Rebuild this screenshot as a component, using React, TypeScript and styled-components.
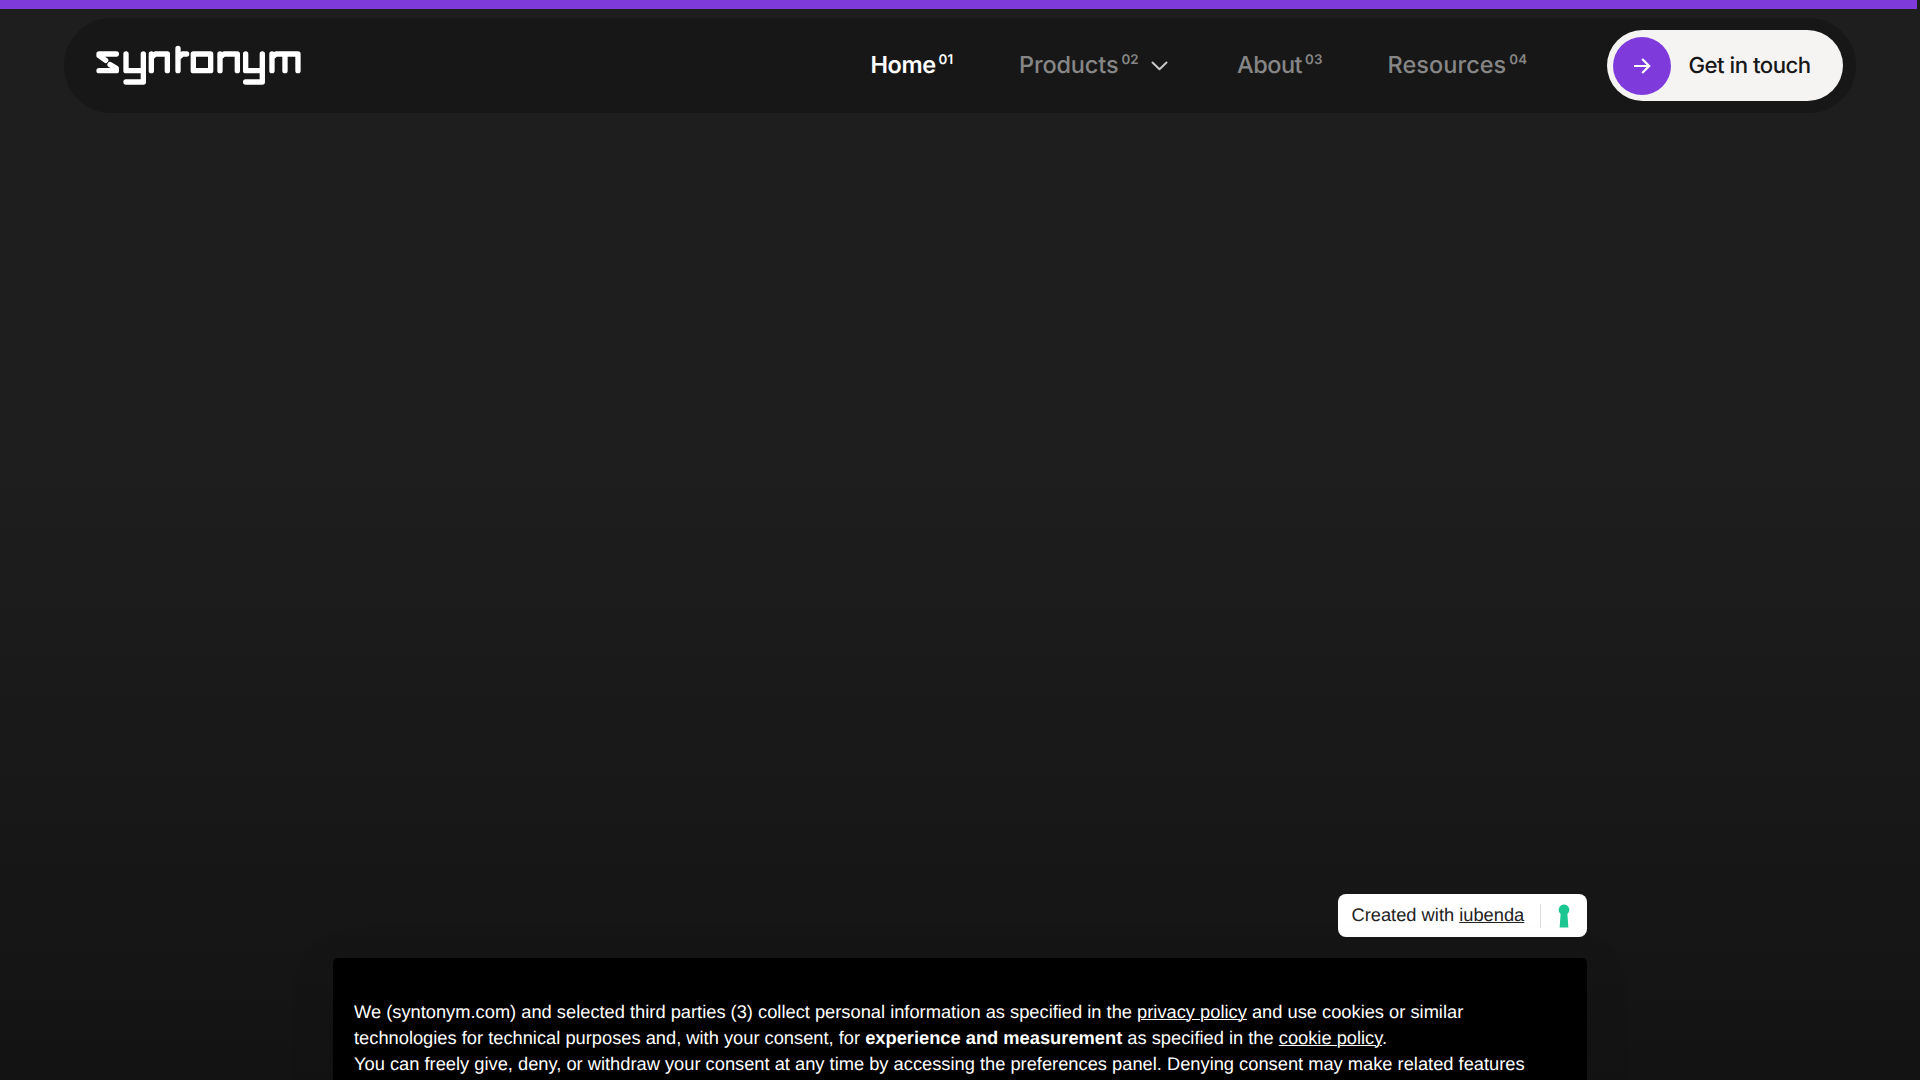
import React from 'react';
import styled, { createGlobalStyle } from 'styled-components';

const GlobalStyle = createGlobalStyle`
  *, *::before, *::after { box-sizing: border-box; }
  body { margin: 0; background: #1e1e1e; overflow: hidden; }
`;

const Page = styled.div`
  height: 1080px;
  overflow: hidden;
  display: flex;
  flex-direction: column;
  font-family: Inter, 'Liberation Sans', sans-serif;
  text-rendering: geometricPrecision;
  background: linear-gradient(180deg, #1e1e1e 0%, #1e1e1e 42%, #181818 73%, #131313 100%);
`;

const Progress = styled.div`
  flex: none;
  width: 1917px;
  height: 9px;
  background: #7f3adc;
`;

const Header = styled.header`
  flex: none;
  display: flex;
  align-items: center;
  height: 95px;
  margin: 9px 64px 0;
  padding: 0 13px 0 32px;
  border-radius: 48px;
  background: #171717;
`;

const LogoLink = styled.a`
  display: block;
  height: 41px;
  margin-right: auto;
`;

const Nav = styled.nav`
  display: flex;
  align-items: center;
`;

const NavItem = styled.a<{ $active?: boolean; $width: number; $spacing: number }>`
  display: flex;
  align-items: center;
  width: ${(p) => p.$width}px;
  padding-bottom: 1px;
  color: ${(p) => (p.$active ? '#ffffff' : '#868686')};
  font-size: 23.5px;
  font-weight: ${(p) => (p.$active ? 600 : 500)};
  line-height: 32px;
  letter-spacing: ${(p) => p.$spacing}px;
  white-space: nowrap;
`;

const Index = styled.span`
  margin: -10px 0 0 3px;
  font-size: 13.33px;
  font-weight: 600;
  line-height: 16px;
  letter-spacing: 0.1px;
`;

const Chevron = styled.svg`
  margin: 1px 0 0 12px;
`;

const Cta = styled.button`
  display: flex;
  align-items: center;
  width: 236px;
  height: 71px;
  margin-bottom: 1px;
  padding: 1px 0 0 6px;
  border: 0;
  border-radius: 36px;
  background: #f5f4f3;
  color: #171717;
  font: 500 22.2px/32px Inter, 'Liberation Sans', sans-serif;
  letter-spacing: -0.5px;
  white-space: nowrap;
  text-rendering: inherit;
`;

const CtaIcon = styled.span`
  display: flex;
  align-items: center;
  justify-content: center;
  width: 58px;
  height: 58px;
  margin-right: 17.5px;
  border-radius: 50%;
  background: #7f3adc;
`;

const Consent = styled.section`
  display: flex;
  flex-direction: column;
  align-items: flex-end;
  width: 1254px;
  margin: auto auto 0;
  font-family: 'Liberation Sans', Arial, sans-serif;
  font-size: 18.3px;
  line-height: 26.13px;
`;

const Badge = styled.div`
  display: flex;
  align-items: center;
  width: 249.5px;
  height: 43px;
  margin-bottom: 21px;
  padding-left: 14px;
  border-radius: 8px;
  background: #ffffff;
  color: #222222;
  white-space: nowrap;
`;

const Link = styled.a`
  text-decoration: underline;
  text-decoration-thickness: 1.33px;
`;

const Divider = styled.span`
  width: 1px;
  height: 24px;
  margin: 0 17px 0 auto;
  background: #dddddd;
`;

const Keyhole = styled.svg`
  margin-right: 17.5px;
`;

const Notice = styled.div`
  width: 100%;
  height: 122px;
  padding: 41px 21px 0;
  border-radius: 5px 5px 0 0;
  background: #000000;
  color: #ffffff;
  box-shadow: 0 10px 48px rgba(0, 0, 0, 0.12);
`;

const Line = styled.p`
  margin: 0;
  white-space: nowrap;
`;

function Logo() {
  return (
    <svg width="205.33" height="40.67" viewBox="138 136 616 122" fill="none" stroke="#fff" strokeWidth="16" strokeLinejoin="round" strokeLinecap="round" aria-label="syntonym">
      <path d="M199 163H147V168L167 182" />
      <path d="M180 195L199 206V213H147" />
      <path d="M228 163V213H280M280 163V247H228" />
      <path d="M304 163V213M304 173L316 163H352V213" />
      <path d="M384 146V213M384 175L397 163H410" />
      <path d="M430 163H482V213H430Z" />
      <path d="M510 163V213M510 173L522 163H562V213" />
      <path d="M587 163V213H637M637 163V247H587" />
      <path d="M666 163V213M666 173L678 163H744V213M705 163V213" />
    </svg>
  );
}

const items = [
  { label: 'Home', index: '01', width: 148.5, spacing: -0.45, active: true },
  { label: 'Products', index: '02', width: 218, spacing: -0.15, menu: true },
  { label: 'About', index: '03', width: 150.5, spacing: -0.5 },
  { label: 'Resources', index: '04', width: 219.5, spacing: 0.05 },
];

export default function App() {
  return (
    <>
      <GlobalStyle />
      <Page>
        <Progress />
        <Header>
          <LogoLink><Logo /></LogoLink>
          <Nav>
            {items.map((item) => (
              <NavItem key={item.label} $active={item.active} $width={item.width} $spacing={item.spacing}>
                {item.label}
                <Index>{item.index}</Index>
                {item.menu && (
                  <Chevron width="17" height="10" viewBox="0 0 17 10" fill="none" stroke="#c8c8c8" strokeWidth="2" strokeLinecap="round" strokeLinejoin="round">
                    <path d="M1.5 1.5L8.5 8.2L15.5 1.5" />
                  </Chevron>
                )}
              </NavItem>
            ))}
          </Nav>
          <Cta>
            <CtaIcon>
              <svg width="18" height="18" viewBox="0 0 18 18" fill="none" stroke="#fff" strokeWidth="2.2">
                <path d="M1 9H16M9.2 2L16.2 9L9.2 16" />
              </svg>
            </CtaIcon>
            Get in touch
          </Cta>
        </Header>
        <Consent>
          <Badge>
            <span>Created with <Link>iubenda</Link></span>
            <Divider />
            <Keyhole width="12" height="24" viewBox="0 0 12 24" fill="#1cc691">
              <path d="M6 0.5A5.4 5.4 0 0 0 2.6 10L1.6 23.5H10.4L9.4 10A5.4 5.4 0 0 0 6 0.5Z" />
            </Keyhole>
          </Badge>
          <Notice>
            <Line>
              We (syntonym.com) and selected third parties (3) collect personal information as specified in the <Link>privacy policy</Link> and use cookies or similar
            </Line>
            <Line>
              technologies for technical purposes and, with your consent, for <strong>experience and measurement</strong> as specified in the <Link>cookie policy</Link>.
            </Line>
            <Line>
              You can freely give, deny, or withdraw your consent at any time by accessing the preferences panel. Denying consent may make related features
            </Line>
          </Notice>
        </Consent>
      </Page>
    </>
  );
}
